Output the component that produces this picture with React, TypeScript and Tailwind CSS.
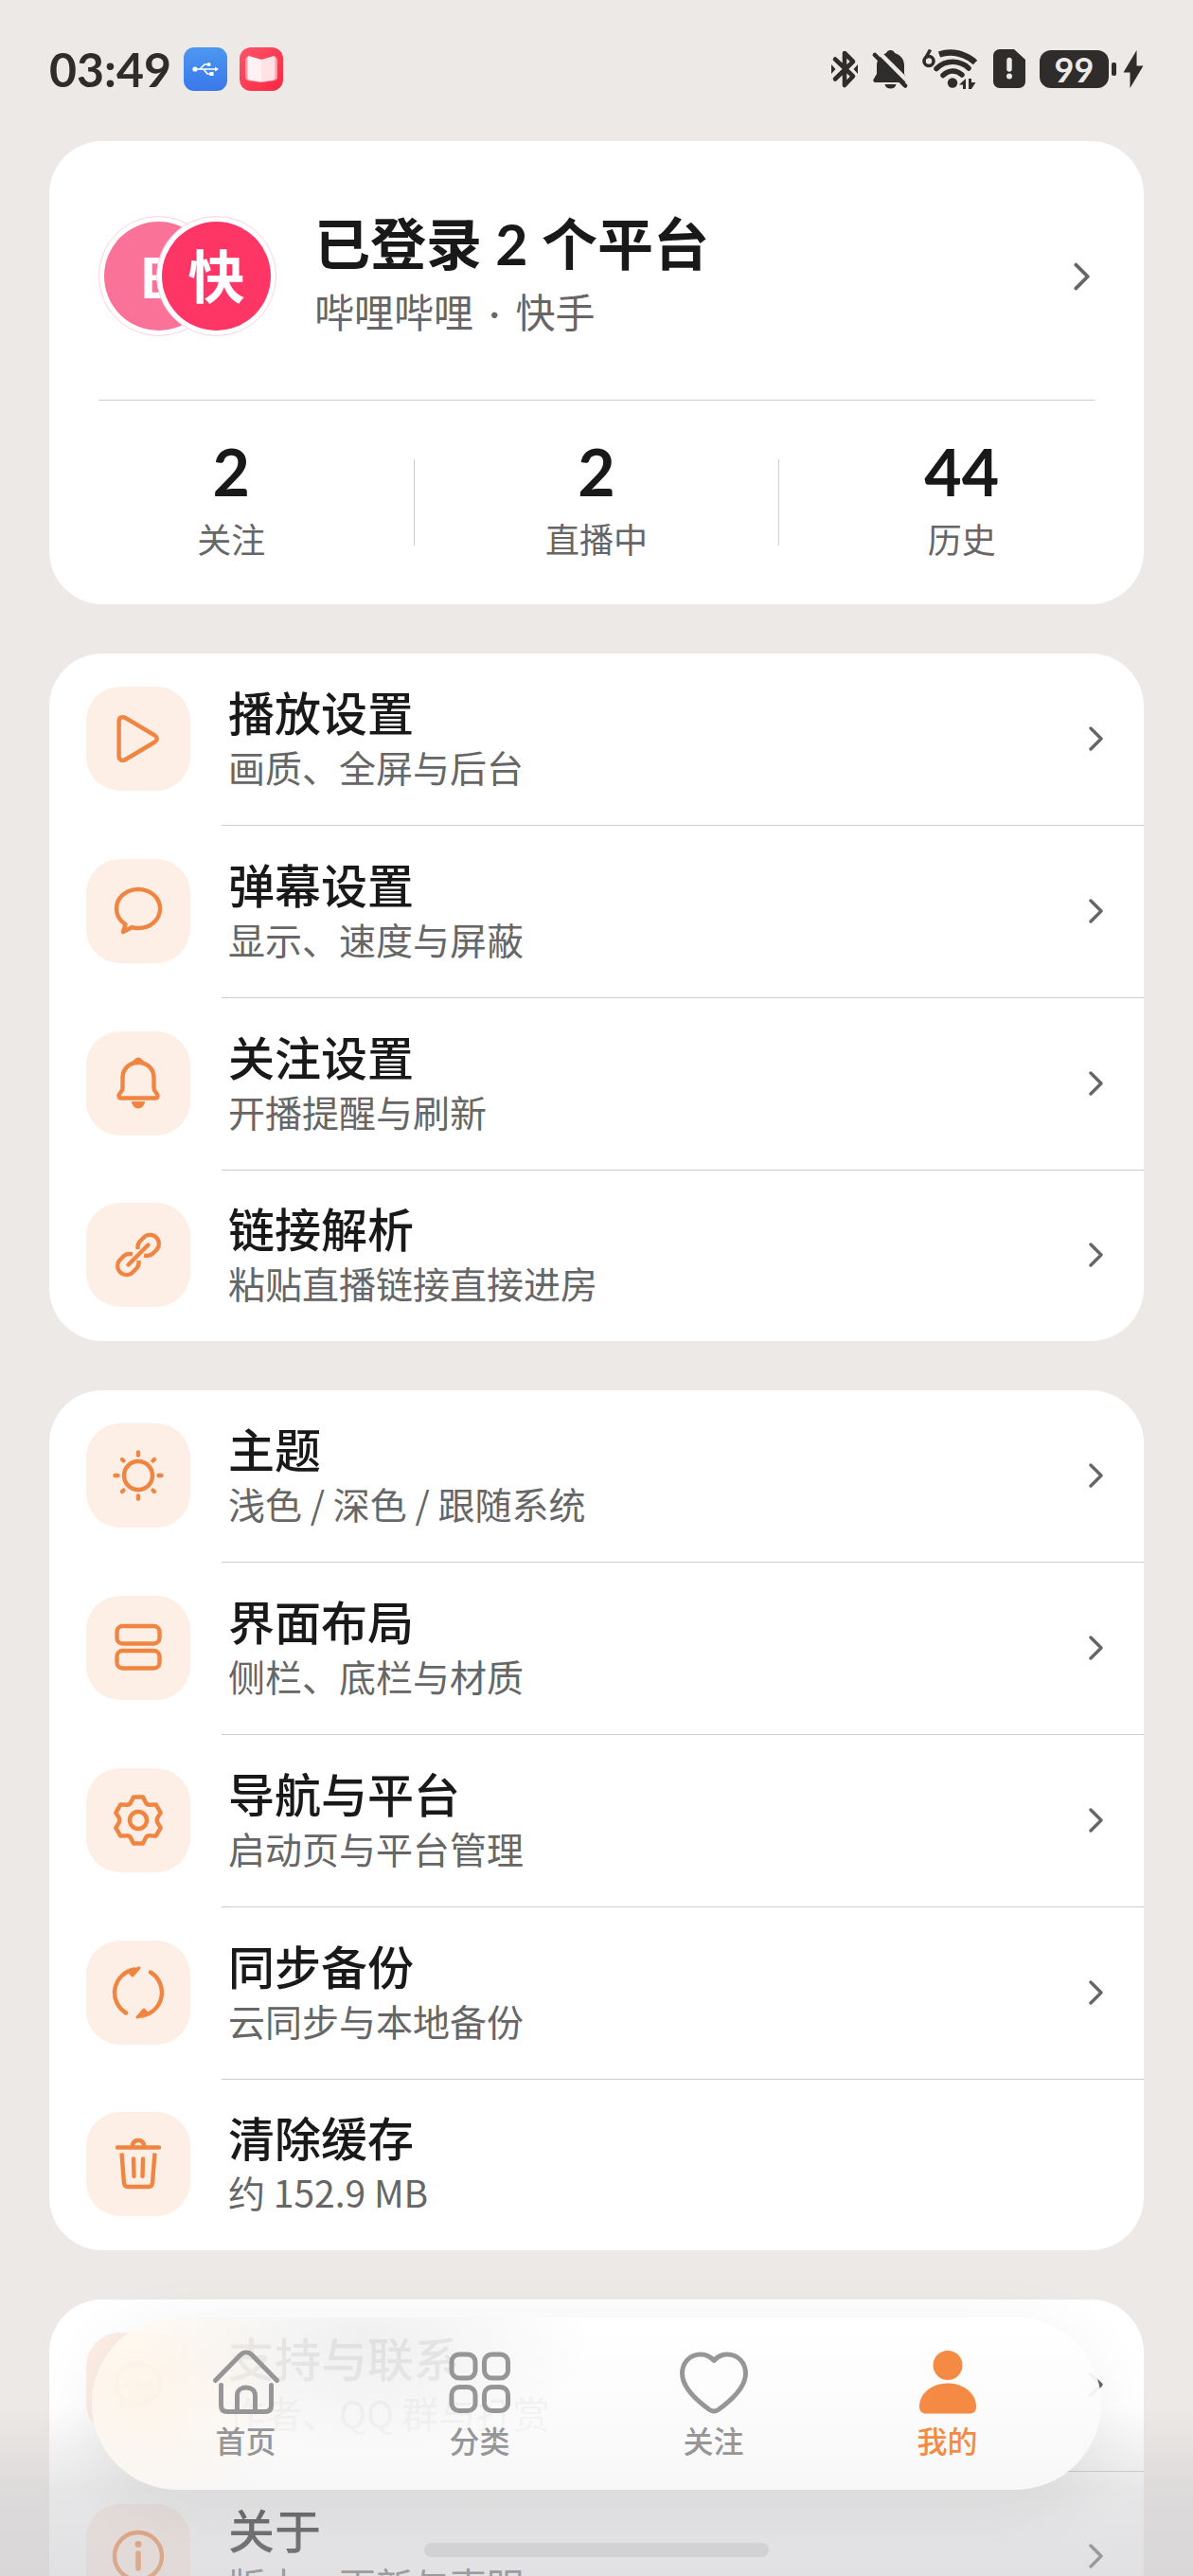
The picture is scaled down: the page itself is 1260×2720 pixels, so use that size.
import React from 'react';

interface RowProps {
  icon: React.ReactNode;
  title: string;
  subtitle: string;
  arrow?: boolean;
}

interface TabProps {
  icon: React.ReactNode;
  label: string;
  active?: boolean;
}

const Glyph: React.FC<{ children: React.ReactNode }> = ({ children }) => (
  <svg
    viewBox="0 0 56 56"
    className="size-14"
    fill="none"
    stroke="currentColor"
    strokeWidth="4.4"
    strokeLinecap="round"
    strokeLinejoin="round"
    aria-hidden="true"
  >
    {children}
  </svg>
);

const Chevron: React.FC<{ className: string }> = ({ className }) => (
  <svg
    viewBox="0 0 16 28"
    className={`shrink-0 text-[#666666] ${className}`}
    fill="none"
    stroke="currentColor"
    strokeWidth="3.4"
    strokeLinecap="round"
    strokeLinejoin="round"
    aria-hidden="true"
  >
    <path d="M3 3 14 14 3 25" />
  </svg>
);

const PlayIcon = () => (
  <Glyph>
    <path d="M7.6 10C7.6 5.5 11 4 14.5 6L45.5 24.5C48.5 26.5 48.5 29.5 45.5 31.5L14.5 50C11 52 7.6 50.5 7.6 46Z" />
  </Glyph>
);

const ChatIcon = () => (
  <Glyph>
    <path d="M14.5 42C8.5 38 5 32 5 25.5 5 14 15 5 28 5S51 14 51 25.5 41 46 28 46C25.5 46 23 45.7 21 45.2L12 50Z" />
  </Glyph>
);

const BellIcon = () => (
  <Glyph>
    <path d="M28 6C18 6 11.5 13 11.5 22V33C11.5 37 7.5 38 7.5 41 7.5 43 8.5 43.5 10 43.5H46C47.5 43.5 48.5 43 48.5 41 48.5 38 44.5 37 44.5 33V22C44.5 13 38 6 28 6Z" />
    <path d="M21 7C24 5 25 1.5 28 1.5S32 5 35 7Z" fill="currentColor" strokeWidth="2" />
    <path d="M21 47H35C35 51 31.5 54.5 28 54.5S21 51 21 47Z" fill="currentColor" stroke="none" />
  </Glyph>
);

const LinkIcon = () => (
  <Glyph>
    <path d="M17.5 38.5 38.5 17.5" />
    <path d="M27.6 22C27 18 28 15.5 30 13.5L35 8.5A9.5 9.5 0 0 1 48 22L43 27C40.5 29 38 29.5 34 28.6" strokeLinecap="butt" />
    <path d="M28.4 34C29 38 28 40.5 26 42.5L21 47.5A9.5 9.5 0 0 1 8 34L13 29C15.5 27 18 26.5 22 27.4" strokeLinecap="butt" />
  </Glyph>
);

const SunIcon = () => (
  <Glyph>
    <circle cx="28" cy="28" r="15" />
    <path d="M28 3.5V6.5M28 49.5V52.5M3.5 28H6.5M49.5 28H52.5M11 11 12.5 12.5M43.5 43.5 45 45M11 45 12.5 43.5M43.5 12.5 45 11" />
  </Glyph>
);

const LayoutIcon = () => (
  <Glyph>
    <rect x="5.5" y="5" width="45" height="18.5" rx="6" />
    <rect x="5.5" y="31" width="45" height="18.5" rx="6" />
  </Glyph>
);

const GearIcon = () => (
  <Glyph>
    <g transform="translate(28 28)">
      <path d="M-5-24.5H5L8-18.5Q9.5-16 12.5-16.3L18.7-16.6 23.7-7.9 20.4-2.7Q19 0 20.4 2.7L23.7 7.9 18.7 16.6 12.5 16.3Q9.5 16 8 18.5L5 24.5H-5L-8 18.5Q-9.5 16-12.5 16.3L-18.7 16.6-23.7 7.9-20.4 2.7Q-19 0-20.4-2.7L-23.7-7.9-18.7-16.6-12.5-16.3Q-9.5-16-8-18.5Z" />
      <circle r="9" />
    </g>
  </Glyph>
);

const SyncIcon = () => (
  <Glyph>
    <path d="M15 49.5A25 25 0 0 1 24 3.5" />
    <path d="M29 2 22 10 18 6Z" fill="currentColor" strokeWidth="3" />
    <path d="M41 6.5A25 25 0 0 1 32 52.5" />
    <path d="M27 54 34 46 38 50Z" fill="currentColor" strokeWidth="3" />
  </Glyph>
);

const TrashIcon = () => (
  <Glyph>
    <path d="M6 10.5H50M21.5 10C22 5 24.5 3 28 3S34 5 34.5 10" />
    <path d="M10.5 16.5 13 48C13.3 50.5 14.5 52 17 52H39C41.5 52 42.7 50.5 43 48L45.5 16.5" strokeLinecap="butt" />
    <path d="M23 22.5 23.5 41M33 22.5 32.5 41" />
  </Glyph>
);

const SupportIcon = () => (
  <Glyph>
    <path d="M11 51V39.5C7 36 5 32 5 27 5 15 15 6 28 6S51 15 51 27 41 48 28 48C23 48 19.5 47 17 46Z" />
    <g fill="currentColor" stroke="none">
      <circle cx="16.5" cy="27" r="2.6" />
      <circle cx="28" cy="27" r="3.8" />
      <circle cx="39.5" cy="27" r="2.6" />
    </g>
  </Glyph>
);

const InfoIcon = () => (
  <Glyph>
    <circle cx="28" cy="28" r="25" />
    <circle cx="28" cy="15.5" r="3.5" fill="currentColor" stroke="none" />
    <path d="M28 25V41" strokeWidth="5.5" />
  </Glyph>
);

const HomeTabIcon = () => (
  <svg viewBox="0 0 72 72" className="size-[72px]" fill="none" stroke="currentColor" strokeWidth="5" strokeLinecap="round" strokeLinejoin="round" aria-hidden="true">
    <path d="M3.5 33.5 30 6.5C33.5 3 38.5 3 42 6.5L68.5 33.5" />
    <path d="M9.5 38.5V60C9.5 64.5 11.5 66.5 16 66.5H56C60.5 66.5 62.5 64.5 62.5 60V38.5" />
    <path d="M26.5 66V49.5C26.5 38 45.5 38 45.5 49.5V66" />
  </svg>
);

const GridTabIcon = () => (
  <svg viewBox="0 0 72 72" className="size-[72px]" fill="none" stroke="currentColor" strokeWidth="5" aria-hidden="true">
    <rect x="6" y="6" width="25" height="25" rx="8" />
    <rect x="40.5" y="6" width="25" height="25" rx="8" />
    <rect x="6" y="40.5" width="25" height="25" rx="8" />
    <rect x="40.5" y="40.5" width="25" height="25" rx="8" />
  </svg>
);

const HeartTabIcon = () => (
  <svg viewBox="0 0 72 72" className="size-[72px]" fill="none" stroke="currentColor" strokeWidth="5" strokeLinejoin="round" aria-hidden="true">
    <path d="M36 12.5C32 8 27.5 6 22 6 10.5 6 2.5 15 2.5 26 2.5 41 17.5 54.5 31.5 64.5 34.5 66.5 37.5 66.5 40.5 64.5 54.5 54.5 69.5 41 69.5 26 69.5 15 61.5 6 50 6 44.5 6 40 8 36 12.5Z" />
  </svg>
);

const UserTabIcon = () => (
  <svg viewBox="0 0 72 72" className="size-[72px]" fill="currentColor" aria-hidden="true">
    <circle cx="36" cy="17.5" r="15.5" />
    <path d="M36 36.5C53 36.5 66 47.5 66 61 66 66 63.5 68.5 58.5 68.5H13.5C8.5 68.5 6 66 6 61 6 47.5 19 36.5 36 36.5Z" />
  </svg>
);

const StatusBar: React.FC = () => (
  <header className="flex h-[149px] items-center justify-between px-[52px] pb-1 text-[#2f2d2b]">
    <div className="flex items-center gap-[13px]">
      <span className="text-[50px] leading-none font-bold">03:49</span>
      <svg viewBox="0 0 46 46" className="size-[46px]" aria-hidden="true">
        <defs>
          <linearGradient id="usb" x1="0" y1="0" x2="0" y2="1">
            <stop offset="0" stopColor="#4d97f0" />
            <stop offset="1" stopColor="#3a78ea" />
          </linearGradient>
        </defs>
        <rect width="46" height="46" rx="11" fill="url(#usb)" />
        <path d="M12 23H34M17 23 22 18H26M21 23 25 28H29" stroke="#ffffff" strokeWidth="1.6" fill="none" />
        <g fill="#ffffff">
          <circle cx="12" cy="23" r="2.6" />
          <circle cx="26.5" cy="18" r="2.1" />
          <path d="M27.5 26H31.5V30H27.5Z" />
          <path d="M33 20.5 37 23 33 25.5Z" />
        </g>
      </svg>
      <svg viewBox="0 0 46 46" className="size-[46px]" aria-hidden="true">
        <defs>
          <linearGradient id="book" x1="0" y1="0" x2="1" y2="1">
            <stop offset="0" stopColor="#ff5468" />
            <stop offset="1" stopColor="#fb2740" />
          </linearGradient>
        </defs>
        <rect width="46" height="46" rx="12" fill="url(#book)" />
        <path d="M6 14C6 11 8 10 11 9.5L23 13 35 9.5C38 10 40 11 40 14V31C40 34 38 35 35 35.5L23 37 11 35.5C8 35 6 34 6 31Z" fill="#ff9aa8" />
        <path d="M9.5 9 23 13V36.5L11 34.5C9 34 8.5 33 8.5 31.5V10Z" fill="#fff0f3" />
        <path d="M36.5 9 23 13V36.5L35 34.5C37 34 37.5 33 37.5 31.5V10Z" fill="#ffe2e6" />
      </svg>
    </div>

    <div className="flex items-center gap-[15px]">
      <svg viewBox="0 0 28 42" className="h-[42px] w-7" fill="none" stroke="currentColor" strokeWidth="4.6" strokeLinejoin="round" strokeLinecap="round" aria-hidden="true">
        <path d="M4 10.5 23 28.5 14 38V4L23 13 4 31.5" />
        <path d="M0 16 4.5 21 0 26ZM28 16 23.5 21 28 26Z" fill="currentColor" stroke="none" />
      </svg>
      <svg viewBox="0 0 38 42" className="h-[42px] w-[38px]" aria-hidden="true">
        <path d="M19.5 1C22 1 23.5 2.5 24 4 30.5 6 34 11 34 17V26L37 31C38 33 37 35 35 35H4C1.5 35 .5 33 2 31L5 26V17C5 11 9 6 15 4 15.5 2.5 17 1 19.5 1Z" fill="currentColor" />
        <path d="M13.5 37H25.5C25 40 22.5 41.5 19.5 41.5S14 40 13.5 37Z" fill="currentColor" />
        <path d="M7 3 40 36" stroke="#ede9e6" strokeWidth="4.5" />
        <path d="M3 6 35 38.5" stroke="currentColor" strokeWidth="4.6" strokeLinecap="round" />
      </svg>
      <svg viewBox="0 0 60 44" className="h-11 w-[60px]" fill="none" stroke="currentColor" strokeWidth="5.5" strokeLinecap="round" aria-hidden="true">
        <path d="M8.5 1.5 3.5 10.5" strokeWidth="3.6" strokeLinecap="butt" />
        <circle cx="7" cy="13.5" r="5" strokeWidth="3.6" />
        <path d="M18 6.5C31 2 46 5.5 56 15" strokeLinecap="butt" strokeWidth="6.5" />
        <path d="M15 21.5C25 11.5 40 12.5 49 21" />
        <path d="M22 28.5C28 22.5 36 22.5 42 28" />
        <circle cx="32" cy="36.5" r="5.2" fill="currentColor" stroke="none" />
        <path d="M39 38.5 46 32V43H43V38.5ZM49 43V32H52V36H56.5L52 43Z" fill="currentColor" stroke="none" />
      </svg>
      <svg viewBox="0 0 34 41" className="h-[41px] w-[34px]" aria-hidden="true">
        <path d="M7 0H22L34 11V34C34 38 31 41 27 41H7C3 41 0 38 0 34V7C0 3 3 0 7 0Z" fill="currentColor" />
        <path d="M17 11.5V21" stroke="#ede9e6" strokeWidth="5.5" strokeLinecap="round" />
        <circle cx="17" cy="28.5" r="3" fill="#ede9e6" />
      </svg>
      <div className="flex items-center gap-[3px]">
        <span className="flex h-10 w-[73px] items-center justify-center rounded-[12px] bg-[#2f2d2b] text-[36px] leading-none font-bold text-[#ede9e6]">
          99
        </span>
        <span className="h-[14px] w-[5px] rounded-[2px] bg-[#2f2d2b]" />
        <svg viewBox="0 0 22 40" className="ml-1 h-10 w-[22px]" fill="currentColor" aria-hidden="true">
          <path d="M14.5 0V16.5H21.5L7.5 40V23.5H.5Z" />
        </svg>
      </div>
    </div>
  </header>
);

const Avatar: React.FC<{ text: string; className: string }> = ({ text, className }) => (
  <span className="flex size-[127px] items-center justify-center rounded-full border border-[#fbd3dd] bg-white">
    <span className={`flex size-[115px] items-center justify-center rounded-full text-[60px] leading-none font-bold text-white ${className}`}>
      {text}
    </span>
  </span>
);

const Stat: React.FC<{ value: number; label: string }> = ({ value, label }) => (
  <div className="flex flex-1 flex-col items-center">
    <span className="text-[68px] leading-[80px] font-bold text-[#191919]">{value}</span>
    <span className="text-[36px] leading-[64px] text-[#666666]">{label}</span>
  </div>
);

const ProfileCard: React.FC = () => (
  <section className="rounded-[56px] bg-white">
    <button type="button" className="flex w-full px-[52px] text-left">
      <span className="flex h-[274px] flex-1 items-center border-b border-[#cccccc] pt-3">
        <span className="flex">
          <Avatar text="B" className="bg-[#fb7299]" />
          <span className="-ml-[66px]">
            <Avatar text="快" className="bg-[#fe3666]" />
          </span>
        </span>
        <span className="ml-10 flex flex-1 flex-col">
          <span className="text-[59px] leading-[76px] font-bold text-[#191919]">已登录 2 个平台</span>
          <span className="text-[42px] leading-[68px] text-[#666666]">
            哔哩哔哩 <span className="mx-[6px]">·</span> 快手
          </span>
        </span>
        <Chevron className="mr-[5px] h-8 w-[18px]" />
      </span>
    </button>
    <div className="flex items-center pt-[35px] pb-9">
      <Stat value={2} label="关注" />
      <span className="h-[91px] w-px bg-[#cccccc]" />
      <Stat value={2} label="直播中" />
      <span className="h-[91px] w-px bg-[#cccccc]" />
      <Stat value={44} label="历史" />
    </div>
  </section>
);

const Row: React.FC<RowProps> = ({ icon, title, subtitle, arrow = true }) => (
  <li className="group">
    <button type="button" className="flex w-full items-center pl-[39px] text-left">
      <span className="mb-[2px] flex size-[110px] items-center justify-center rounded-[36px] bg-[#fdeee6] text-[#f08542]">{icon}</span>
      <span className="ml-[33px] flex h-[182px] flex-1 items-center border-b border-[#cccccc] pr-[43px] pb-[2px] pl-[7px] group-last:h-[180px] group-last:border-b-0">
        <span className="flex flex-1 flex-col pb-1">
          <span className="text-[49px] leading-[62px] font-medium text-[#191919]">{title}</span>
          <span className="font-['Noto_Sans_CJK_SC',sans-serif] text-[39px] leading-[50px] text-[#666666]">{subtitle}</span>
        </span>
        {arrow && <Chevron className="h-7 w-4" />}
      </span>
    </button>
  </li>
);

const ListCard: React.FC<{ rows: RowProps[] }> = ({ rows }) => (
  <ul className="overflow-hidden rounded-[56px] bg-white">
    {rows.map((row) => (
      <Row key={row.title} {...row} />
    ))}
  </ul>
);

const Tab: React.FC<TabProps> = ({ icon, label, active = false }) => (
  <a
    href="#"
    aria-current={active ? 'page' : undefined}
    className={`flex flex-1 flex-col items-center ${active ? 'text-[#f58a45]' : 'text-[#969699]'}`}
  >
    {icon}
    <span className="text-[32px] leading-[52px] font-medium">{label}</span>
  </a>
);

const playRows: RowProps[] = [
  { icon: <PlayIcon />, title: '播放设置', subtitle: '画质、全屏与后台' },
  { icon: <ChatIcon />, title: '弹幕设置', subtitle: '显示、速度与屏蔽' },
  { icon: <BellIcon />, title: '关注设置', subtitle: '开播提醒与刷新' },
  { icon: <LinkIcon />, title: '链接解析', subtitle: '粘贴直播链接直接进房' },
];

const appRows: RowProps[] = [
  { icon: <SunIcon />, title: '主题', subtitle: '浅色 / 深色 / 跟随系统' },
  { icon: <LayoutIcon />, title: '界面布局', subtitle: '侧栏、底栏与材质' },
  { icon: <GearIcon />, title: '导航与平台', subtitle: '启动页与平台管理' },
  { icon: <SyncIcon />, title: '同步备份', subtitle: '云同步与本地备份' },
  { icon: <TrashIcon />, title: '清除缓存', subtitle: '约 152.9 MB', arrow: false },
];

const aboutRows: RowProps[] = [
  { icon: <SupportIcon />, title: '支持与联系', subtitle: '作者、QQ 群与打赏' },
  { icon: <InfoIcon />, title: '关于', subtitle: '版本、更新与声明' },
];

const App: React.FC = () => {
  return (
    <div className="relative h-screen overflow-hidden bg-[#ede9e6] font-['Lato','Noto_Sans_CJK_SC',sans-serif]">
      <StatusBar />
      <main className="flex flex-col gap-[52px] px-[52px]">
        <ProfileCard />
        <ListCard rows={playRows} />
        <ListCard rows={appRows} />
        <ListCard rows={aboutRows} />
      </main>

      {/* scrim under the floating tab bar */}
      <div className="pointer-events-none absolute inset-x-0 bottom-0 h-[180px] bg-linear-to-b from-[#c8c8cb]/0 via-[#c8c8cb]/45 via-50% to-[#c8c8cb]/55" />

      <nav className="absolute inset-x-[97px] bottom-[91px] overflow-hidden rounded-full bg-linear-to-b from-white/92 to-[#f8f8f9]/96 shadow-[0_14px_70px_rgba(0,0,0,0.07)]">
        <div className="flex h-[182px] bg-[radial-gradient(ellipse_240px_120px_at_27%_12%,rgba(0,0,0,0.06),transparent),radial-gradient(ellipse_170px_150px_at_5%_40%,rgba(255,240,220,0.6),transparent)] px-[39px] pt-[33px]">
          <Tab icon={<HomeTabIcon />} label="首页" />
          <Tab icon={<GridTabIcon />} label="分类" />
          <Tab icon={<HeartTabIcon />} label="关注" />
          <Tab icon={<UserTabIcon />} label="我的" active />
        </div>
      </nav>

      <div className="pointer-events-none absolute inset-x-0 bottom-5 flex justify-center">
        <span className="h-[15px] w-[364px] rounded-full bg-[#d2d2d4]" />
      </div>
    </div>
  );
};

export default App;
